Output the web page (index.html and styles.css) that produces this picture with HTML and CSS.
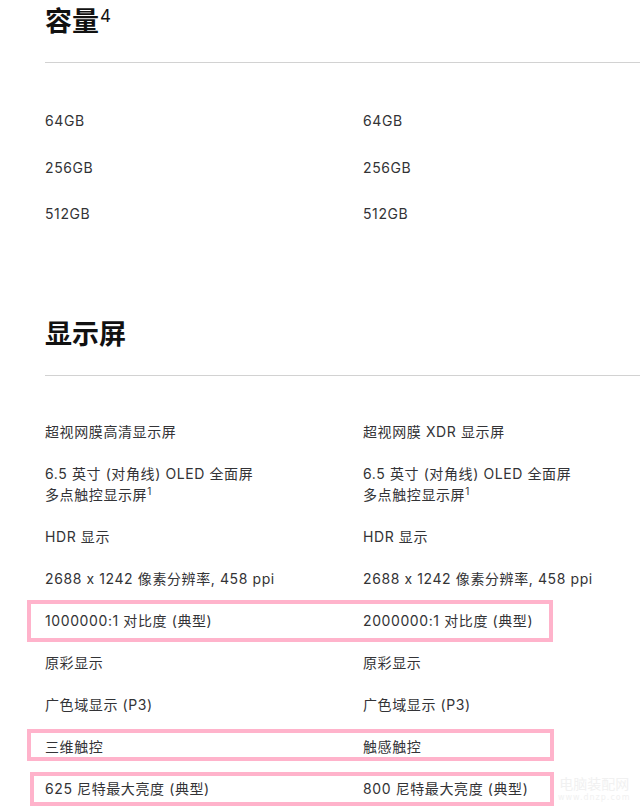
FILE: index.html
```html
<!DOCTYPE html>
<html lang="zh-CN">
<head>
<meta charset="utf-8">
<title>技术规格</title>
<link rel="stylesheet" href="styles.css">
</head>
<body>
<main class="page">
  <section class="spec spec-capacity">
    <h2 class="spec-title">容量<sup class="title-sup">4</sup></h2>
    <hr class="divider">
    <div class="rows rows-capacity">
      <div class="row"><div class="cell">64GB</div><div class="cell">64GB</div></div>
      <div class="row"><div class="cell">256GB</div><div class="cell">256GB</div></div>
      <div class="row"><div class="cell">512GB</div><div class="cell">512GB</div></div>
    </div>
  </section>

  <section class="spec spec-display">
    <h2 class="spec-title">显示屏</h2>
    <hr class="divider">
    <div class="rows rows-display">
      <div class="row"><div class="cell">超视网膜高清显示屏</div><div class="cell">超视网膜 XDR 显示屏</div></div>
      <div class="row"><div class="cell">6.5 英寸 (对角线) OLED 全面屏<br>多点触控显示屏<sup class="note">1</sup></div><div class="cell">6.5 英寸 (对角线) OLED 全面屏<br>多点触控显示屏<sup class="note">1</sup></div></div>
      <div class="row"><div class="cell">HDR 显示</div><div class="cell">HDR 显示</div></div>
      <div class="row"><div class="cell">2688 x 1242 像素分辨率, 458 ppi</div><div class="cell">2688 x 1242 像素分辨率, 458 ppi</div></div>
      <div class="row"><div class="cell">1000000:1 对比度 (典型)</div><div class="cell">2000000:1 对比度 (典型)</div></div>
      <div class="row"><div class="cell">原彩显示</div><div class="cell">原彩显示</div></div>
      <div class="row"><div class="cell">广色域显示 (P3)</div><div class="cell">广色域显示 (P3)</div></div>
      <div class="row"><div class="cell">三维触控</div><div class="cell">触感触控</div></div>
      <div class="row"><div class="cell">625 尼特最大亮度 (典型)</div><div class="cell">800 尼特最大亮度 (典型)</div></div>
    </div>
  </section>

  <div class="mark mark-contrast"></div>
  <div class="mark mark-touch"></div>
  <div class="mark mark-bright"></div>

  <div class="watermark">
    <span class="wm-name">电脑装配网</span>
    <span class="wm-url">www.dnzp.com</span>
  </div>
</main>
</body>
</html>
```

FILE: styles.css
```css
* { box-sizing: border-box; }

html, body {
  margin: 0;
  padding: 0;
  background: #ffffff;
}

body {
  width: 640px;
  height: 810px;
  overflow: hidden;
  font-family: "Inter", "Noto Sans CJK SC", sans-serif;
  font-feature-settings: "calt" 0;
  color: #333336;
}

.page {
  position: relative;
  padding: 4px 0 0 45px;
  height: 810px;
}

.spec-title {
  margin: 0;
  height: 32px;
  font-size: 27px;
  line-height: 32px;
  font-weight: 700;
  color: #111111;
  font-family: "Noto Sans CJK SC", sans-serif;
}

.title-sup {
  font-family: "Inter", sans-serif;
  font-size: 17px;
  font-weight: 400;
  line-height: 0;
  vertical-align: 0;
  position: relative;
  top: -9px;
  margin-left: 1px;
}

.divider {
  margin: 26px 0 0 0;
  border: 0;
  height: 1px;
  background: #d2d2d2;
}

.rows {
  display: flex;
  flex-direction: column;
  padding-top: 47px;
}

.rows-capacity { gap: 25.5px; }
.rows-display { gap: 21px; padding-top: 45px; }

.spec-display { margin-top: 93px; }

.row {
  display: grid;
  grid-template-columns: 318px 1fr;
  font-size: 14px;
  line-height: 21px;
  letter-spacing: 0.6px;
}

.cell { white-space: nowrap; }

.note {
  font-size: 10px;
  line-height: 0;
  vertical-align: 0;
  position: relative;
  top: -5px;
  letter-spacing: 0;
}

.mark {
  position: absolute;
  border: 4px solid #ffb3cb;
}

.mark-contrast { left: 27px; top: 600px; width: 526px; height: 42px; }
.mark-touch { left: 27px; top: 729px; width: 527px; height: 32px; }
.mark-bright { left: 30px; top: 772px; width: 524px; height: 34px; }

.watermark {
  position: absolute;
  left: 558px;
  top: 774px;
  display: flex;
  flex-direction: column;
  align-items: center;
  color: #f1f1f1;
  font-family: "Noto Sans CJK SC", sans-serif;
}

.wm-name { font-size: 14px; line-height: 18px; letter-spacing: 0; }
.wm-url { font-size: 8px; line-height: 12px; letter-spacing: 1px; font-family: "DejaVu Sans", sans-serif; }
```
